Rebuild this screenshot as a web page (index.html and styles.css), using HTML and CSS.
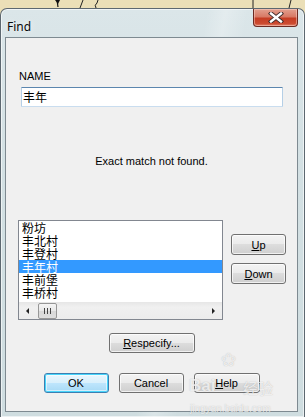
FILE: index.html
```html
<!DOCTYPE html>
<html>
<head>
<meta charset="utf-8">
<link rel="stylesheet" href="styles.css">
</head>
<body>
<svg class="bgmarks" width="305" height="8" viewBox="0 0 305 8">
  <path d="M55 0 L58 4 L60 0 Z" fill="#111"/>
  <path d="M57 0 L58 7" stroke="#111" stroke-width="1.2"/>
  <path d="M80 8 L83 0" stroke="#222" stroke-width="1"/>
  <path d="M96 8 Q94 5 97 3 L98 0" stroke="#222" stroke-width="1" fill="none"/>
  <path d="M253 0 L253 8" stroke="#222" stroke-width="1"/>
  <path d="M291 0 L289 8" stroke="#222" stroke-width="1"/>
</svg>
<div class="window">
  <div class="titlebar">
    <span class="title">Find</span>
    <div class="close">
      <svg width="16" height="11" viewBox="0 0 16 11">
        <path d="M3 1.5 L13 9.5 M13 1.5 L3 9.5" stroke="#3a2a2a" stroke-width="4.2" stroke-linecap="square"/>
        <path d="M3 1.5 L13 9.5 M13 1.5 L3 9.5" stroke="#fff" stroke-width="2.4" stroke-linecap="square"/>
      </svg>
    </div>
  </div>
  <div class="client">
    <div class="name-label">NAME</div>
    <div class="input">丰年</div>
    <p class="msg">Exact match not found.</p>
    <div class="list-row">
      <div class="listbox">
        <ul class="items">
          <li>粉坊</li>
          <li>丰北村</li>
          <li>丰登村</li>
          <li class="sel">丰年村</li>
          <li>丰前堡</li>
          <li>丰桥村</li>
        </ul>
        <div class="hscroll">
          <span class="arrow left"></span>
          <span class="thumb"><span class="grip"></span><span class="grip"></span><span class="grip"></span></span>
          <span class="track"></span>
          <span class="arrow right"></span>
        </div>
      </div>
      <div class="side-btns">
        <button class="btn side"><u>U</u>p</button>
        <button class="btn side"><u>D</u>own</button>
      </div>
    </div>
    <div class="respec-row">
      <button class="btn respec"><u>R</u>especify...</button>
    </div>
    <div class="bottom-row">
      <button class="btn ok">OK</button>
      <button class="btn">Cancel</button>
      <button class="btn help"><u>H</u>elp</button>
    </div>
  </div>
  <div class="watermark">
    <span class="wm-bai">Bai</span><span class="wm-paw">❀</span><span class="wm-jy">经验</span>
    <span class="wm-url">jingyan.baidu.com</span>
  </div>
</div>
</body>
</html>
```
FILE: styles.css
```css
html, body {
  margin: 0;
  padding: 0;
}
body {
  width: 305px;
  height: 417px;
  overflow: hidden;
  background: #ebdfb7;
  font-family: "Liberation Sans", Arial, sans-serif;
  font-size: 11px;
  color: #000;
}
.bgmarks {
  display: block;
  height: 8px;
}
.window {
  position: relative;
  height: 409px;
  box-sizing: border-box;
  border: 1px solid #5d6870;
  border-bottom: none;
  border-radius: 7px 7px 0 0;
  background:
    linear-gradient(100deg, rgba(255,255,255,0) 0%, rgba(255,255,255,0) 55%, rgba(255,255,255,0.25) 60%, rgba(255,255,255,0) 66%),
    linear-gradient(180deg, #dbe6e9 0%, #d3e0e3 40%, #cfdde0 100%);
  box-shadow: inset 0 0 0 1px rgba(255,255,255,0.6);
}
.titlebar {
  height: 28px;
  display: flex;
  justify-content: space-between;
  align-items: flex-start;
}
.title {
  font-family: "Noto Sans", "Open Sans", sans-serif;
  font-size: 12px;
  line-height: 16px;
  margin: 10px 0 0 6px;
  color: #0a0a0a;
  text-shadow: 0 0 6px rgba(255,255,255,0.9);
}
.close {
  width: 45px;
  height: 18px;
  margin-right: 6px;
  box-sizing: border-box;
  border: 1px solid #6b2a22;
  border-top: none;
  border-radius: 0 0 4px 4px;
  background: linear-gradient(180deg, #e2a08f 0%, #d87a66 45%, #c53d24 55%, #cc4a2f 85%, #e0826a 100%);
  box-shadow: inset 0 0 0 1px rgba(255,220,210,0.45);
  display: flex;
  align-items: center;
  justify-content: center;
}
.close svg {
  display: block;
}
.client {
  margin: 0 6px 0 4px;
  height: 375px;
  box-sizing: border-box;
  border: 1px solid #7e8a91;
  background: #f0f0f0;
  display: flex;
  flex-direction: column;
}
.name-label {
  margin: 32px 0 0 13px;
  line-height: 13px;
  height: 13px;
}
.input {
  margin: 4px 0 0 15px;
  width: 262px;
  height: 20px;
  box-sizing: border-box;
  border: 1px solid;
  border-color: #5c86ae #b5cfe6 #c9ddef #b5cfe6;
  border-radius: 1px;
  background: #fff;
  font-family: "Noto Sans CJK SC", sans-serif;
  font-size: 12px;
  line-height: 18px;
  padding-left: 1px;
}
.msg {
  margin: 48px 0 0 0;
  text-align: center;
  line-height: 13px;
  height: 13px;
}
.list-row {
  margin: 52px 0 0 12px;
  display: flex;
  gap: 8px;
  align-items: flex-start;
}
.listbox {
  width: 205px;
  height: 100px;
  box-sizing: border-box;
  border: 1px solid #828790;
  background: #fff;
  display: flex;
  flex-direction: column;
}
.items {
  list-style: none;
  margin: 0;
  padding: 0;
  font-family: "Noto Sans CJK SC", sans-serif;
  font-size: 12px;
  flex: 1;
}
.items li {
  height: 13px;
  line-height: 13px;
  padding-left: 3px;
  white-space: nowrap;
}
.items li.sel {
  background: #3399ff;
  color: #fff;
}
.hscroll {
  height: 17px;
  background: linear-gradient(180deg, #e6e6e6 0%, #f0f0f0 30%, #ececec 100%);
  display: flex;
  align-items: center;
}
.arrow {
  width: 0;
  height: 0;
  border-top: 3px solid transparent;
  border-bottom: 3px solid transparent;
}
.arrow.left {
  border-right: 3px solid #222;
  margin-left: 7px;
}
.arrow.right {
  border-left: 3px solid #222;
  margin-right: 7px;
}
.thumb {
  margin-left: 9px;
  width: 19px;
  height: 16px;
  box-sizing: border-box;
  border: 1px solid #979797;
  border-radius: 2px;
  background: linear-gradient(180deg, #f5f5f5 0%, #e8e8e8 50%, #d8d8d8 51%, #dedede 100%);
  display: flex;
  justify-content: center;
  align-items: center;
  gap: 2px;
}
.grip {
  width: 1px;
  height: 6px;
  background: #444;
}
.track {
  flex: 1;
}
.side-btns {
  margin-top: 14px;
  display: flex;
  flex-direction: column;
  gap: 8px;
}
.btn {
  font-family: "Liberation Sans", Arial, sans-serif;
  font-size: 11px;
  color: #000;
  height: 21px;
  width: 65px;
  padding: 0;
  box-sizing: border-box;
  border: 1px solid #707070;
  border-radius: 3px;
  background: linear-gradient(180deg, #f3f3f3 0%, #ebebeb 48%, #dddddd 50%, #cfcfcf 100%);
  box-shadow: inset 0 0 0 1px rgba(255,255,255,0.7);
  line-height: 18px;
  text-align: center;
}
.btn u {
  text-decoration: underline;
}
.btn.side {
  width: 55px;
}
.respec-row {
  margin-top: 13px;
  display: flex;
  justify-content: center;
}
.btn.respec {
  width: 86px;
  height: 20px;
}
.bottom-row {
  margin-top: 20px;
  display: flex;
  justify-content: center;
  gap: 10px;
}
.bottom-row .btn {
  height: 20px;
}
.btn.help {
  width: 66px;
}
.btn.ok {
  border-color: #3c7fb1;
  box-shadow: inset 0 0 0 1px #48d5fb, inset 0 0 0 2px rgba(255,255,255,0.5);
  background: linear-gradient(180deg, #eaf6fd 0%, #d9f0fc 48%, #bee6fd 50%, #a7d9f5 100%);
}
.watermark {
  position: absolute;
  left: 186px;
  top: 318px;
  width: 100px;
  height: 90px;
  pointer-events: none;
  color: rgba(255,255,255,0.75);
  text-shadow: 0 0 1px rgba(120,120,120,0.5);
}
.wm-bai {
  position: absolute;
  left: 2px;
  top: 49px;
  font-family: "Liberation Sans", Arial, sans-serif;
  font-weight: bold;
  font-size: 17px;
}
.wm-paw {
  position: absolute;
  left: 34px;
  top: 22px;
  font-size: 18px;
}
.wm-jy {
  position: absolute;
  left: 56px;
  top: 50px;
  font-family: "Noto Sans CJK SC", sans-serif;
  font-size: 15px;
}
.wm-url {
  position: absolute;
  left: 3px;
  top: 76px;
  font-size: 10px;
  white-space: nowrap;
}
```
